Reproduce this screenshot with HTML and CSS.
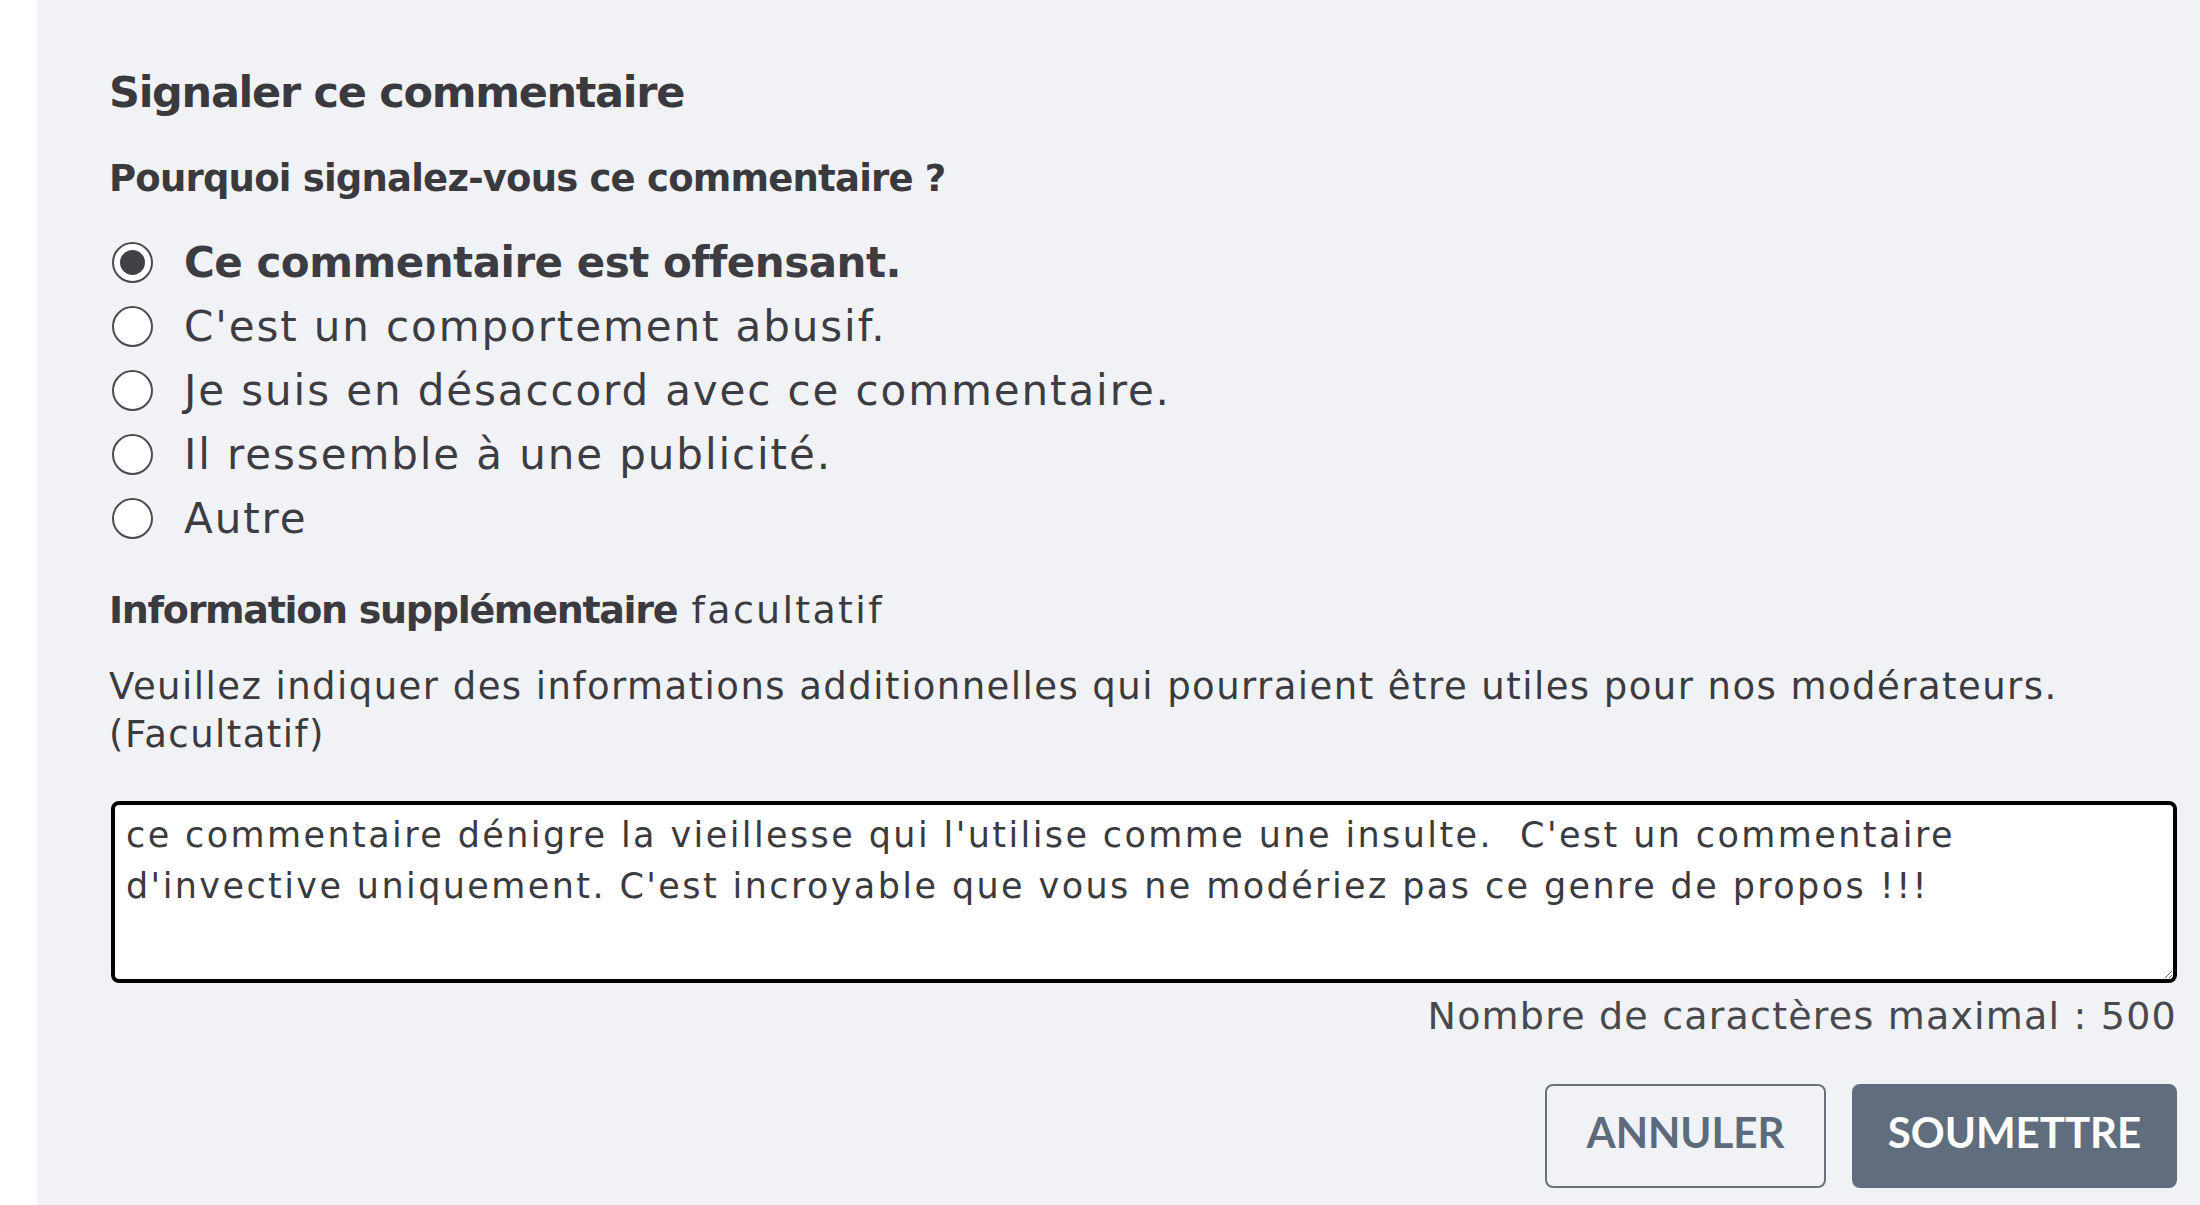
FILE: index.html
```html
<!DOCTYPE html>
<html lang="fr">
<head>
<meta charset="utf-8">
<title>Signaler ce commentaire</title>
<link rel="stylesheet" href="styles.css">
</head>
<body>
<div class="page">
  <div class="gutter"></div>
  <main class="panel">
    <h2 class="title">Signaler ce commentaire</h2>
    <p class="question">Pourquoi signalez-vous ce commentaire ?</p>
    <div class="options">
      <label class="option selected"><input type="radio" name="reason" checked><span>Ce commentaire est offensant.</span></label>
      <label class="option"><input type="radio" name="reason"><span>C'est un comportement abusif.</span></label>
      <label class="option"><input type="radio" name="reason"><span>Je suis en désaccord avec ce commentaire.</span></label>
      <label class="option"><input type="radio" name="reason"><span>Il ressemble à une publicité.</span></label>
      <label class="option"><input type="radio" name="reason"><span>Autre</span></label>
    </div>
    <p class="info-label"><strong>Information supplémentaire</strong> facultatif</p>
    <p class="info-desc">Veuillez indiquer des informations additionnelles qui pourraient être utiles pour nos modérateurs.<br>(Facultatif)</p>
    <textarea class="details">ce commentaire dénigre la vieillesse qui l'utilise comme une insulte.  C'est un commentaire
d'invective uniquement. C'est incroyable que vous ne modériez pas ce genre de propos !!!</textarea>
    <p class="counter">Nombre de caractères maximal : 500</p>
    <div class="actions">
      <button class="btn btn-cancel" type="button">Annuler</button>
      <button class="btn btn-submit" type="button">Soumettre</button>
    </div>
  </main>
</div>
</body>
</html>
```

FILE: styles.css
```css
html, body {
  margin: 0;
  padding: 0;
  background: #ffffff;
}

body {
  font-family: "DejaVu Sans", "Lato", sans-serif;
  color: #3a3a3f;
}

.page {
  display: flex;
  min-height: 1205px;
}

.gutter {
  width: 37px;
  flex: none;
  background: #ffffff;
}

.panel {
  flex: 1;
  background: #f1f2f6;
  padding: 62px 23px 0 72px;
  display: flex;
  flex-direction: column;
}

.title {
  margin: 0;
  font-size: 43px;
  line-height: 60px;
  font-weight: 700;
  letter-spacing: -1.3px;
  color: #3a3a3e;
}

.question {
  margin: 32px 0 0;
  font-size: 37px;
  line-height: 50px;
  font-weight: 700;
  letter-spacing: -0.8px;
  color: #3a3a3e;
}

.options {
  margin-top: 26px;
  display: flex;
  flex-direction: column;
}

.option {
  display: flex;
  align-items: center;
  height: 64px;
  gap: 31px;
  font-size: 42px;
  letter-spacing: 1.9px;
  color: #3c3c42;
}

.option.selected {
  font-weight: 700;
  letter-spacing: -0.5px;
}

.option input {
  appearance: none;
  -webkit-appearance: none;
  margin: 0 0 0 3px;
  width: 41px;
  height: 41px;
  border: 2px solid #4a4a50;
  border-radius: 50%;
  background: #ffffff;
  display: grid;
  place-items: center;
  flex: none;
}

.option input:checked::after {
  content: "";
  width: 25px;
  height: 25px;
  border-radius: 50%;
  background: #404046;
}

.info-label {
  margin: 35px 0 0;
  font-size: 38px;
  line-height: 50px;
  letter-spacing: 2.3px;
  color: #3a3a3f;
}

.info-label strong {
  font-weight: 700;
  letter-spacing: -1.3px;
}

.info-desc {
  margin: 28px 0 0;
  font-size: 37px;
  line-height: 48px;
  letter-spacing: 1.45px;
  color: #3a3a3f;
}

.details {
  margin: 42px 0 0 2px;
  height: 182px;
  box-sizing: border-box;
  border: 4px solid #000000;
  border-radius: 8px;
  background: #ffffff;
  padding: 5px 11px 4px;
  font-family: "DejaVu Sans", "Lato", sans-serif;
  font-size: 35px;
  line-height: 51px;
  letter-spacing: 2.4px;
  color: #3a3a3f;
  resize: vertical;
  outline: none;
  white-space: pre-wrap;
}

.counter {
  margin: 9px 0 0;
  text-align: right;
  font-size: 38px;
  line-height: 48px;
  letter-spacing: 1.2px;
  color: #48484d;
}

.actions {
  margin-top: 44px;
  display: flex;
  justify-content: flex-end;
  gap: 26px;
}

.btn {
  height: 104px;
  border-radius: 8px;
  padding: 0 0 9px;
  font-family: "Lato", "DejaVu Sans", sans-serif;
  font-size: 42px;
  font-weight: 700;
  text-transform: uppercase;
  box-sizing: border-box;
  cursor: pointer;
}

.btn-cancel {
  width: 281px;
  background: transparent;
  border: 2px solid #66737f;
  color: #5c6a7a;
}

.btn-submit {
  width: 325px;
  background: #5f6d7d;
  border: 2px solid #5f6d7d;
  color: #ffffff;
}
```
